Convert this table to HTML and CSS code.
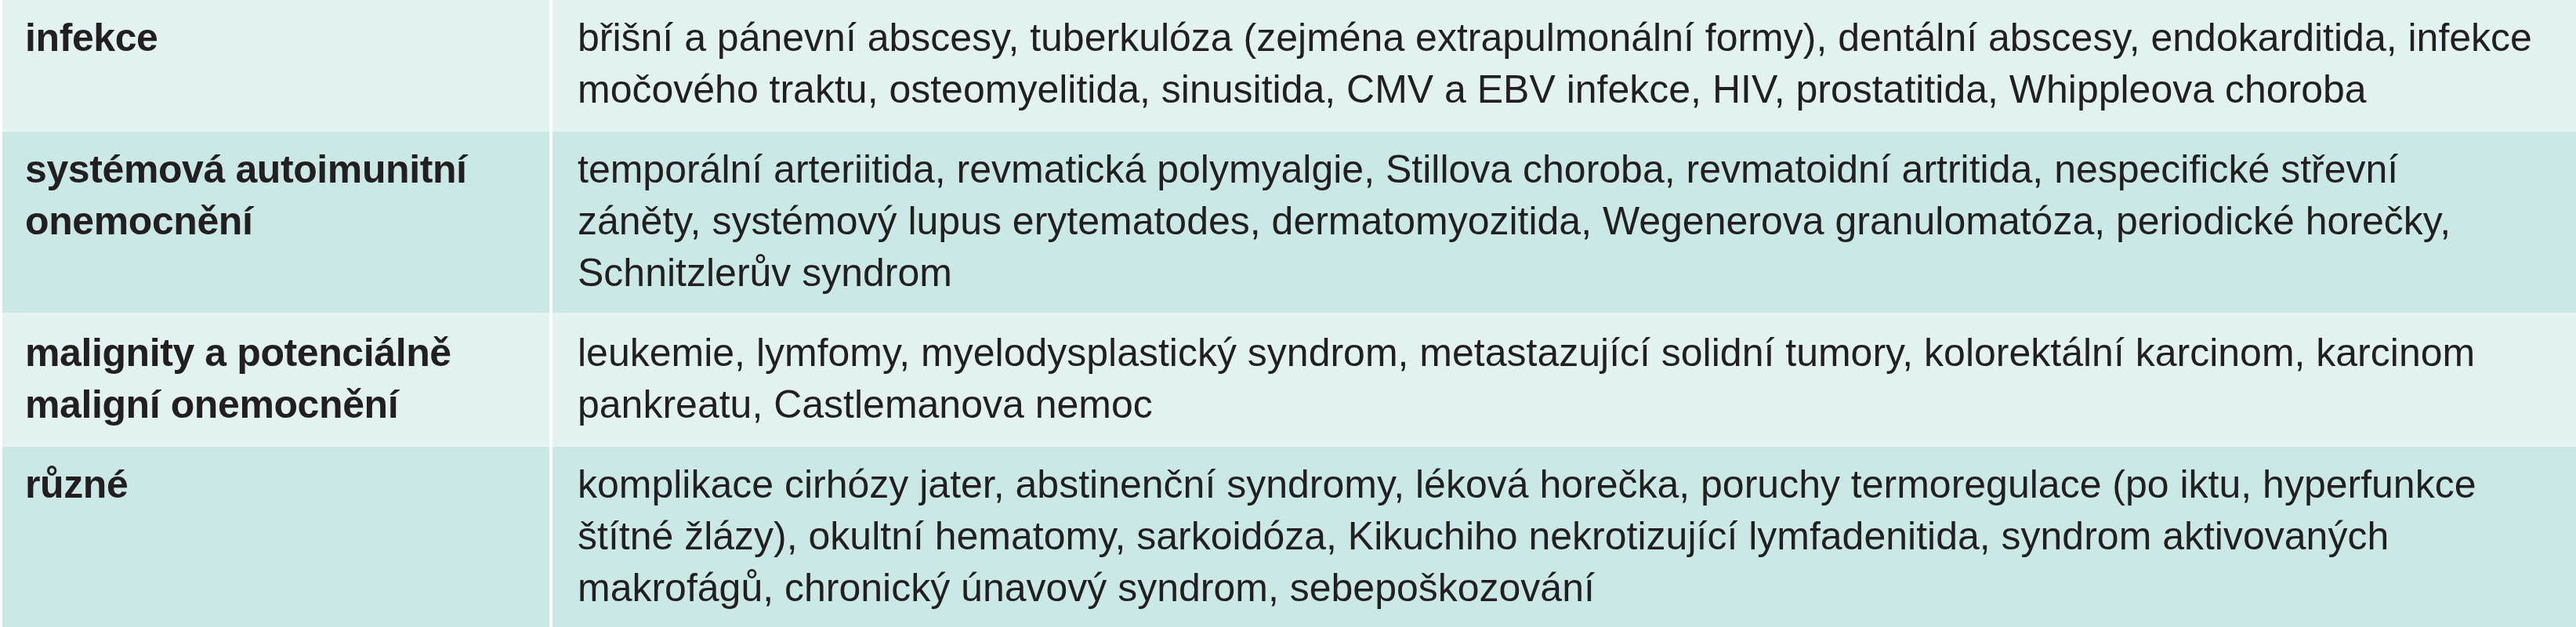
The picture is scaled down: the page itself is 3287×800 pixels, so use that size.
FILE: index.html
```html
<!DOCTYPE html>
<html lang="cs">
<head>
<meta charset="utf-8">
<title>Příčiny horečky</title>
<link rel="stylesheet" href="styles.css">
</head>
<body>
<div class="table">
  <div class="row light">
    <div class="cat">infekce</div>
    <div class="desc">břišní a pánevní abscesy, tuberkulóza (zejména extrapulmonální formy), dentální abscesy, endokarditida, infekce<br>močového traktu, osteomyelitida, sinusitida, CMV a EBV infekce, HIV, prostatitida, Whippleova choroba</div>
  </div>
  <div class="row dark">
    <div class="cat">systémová autoimunitní<br>onemocnění</div>
    <div class="desc">temporální arteriitida, revmatická polymyalgie, Stillova choroba, revmatoidní artritida, nespecifické střevní<br>záněty, systémový lupus erytematodes, dermatomyozitida, Wegenerova granulomatóza, periodické horečky,<br>Schnitzlerův syndrom</div>
  </div>
  <div class="row light">
    <div class="cat">malignity a potenciálně<br>maligní onemocnění</div>
    <div class="desc">leukemie, lymfomy, myelodysplastický syndrom, metastazující solidní tumory, kolorektální karcinom, karcinom<br>pankreatu, Castlemanova nemoc</div>
  </div>
  <div class="row dark">
    <div class="cat">různé</div>
    <div class="desc">komplikace cirhózy jater, abstinenční syndromy, léková horečka, poruchy termoregulace (po iktu, hyperfunkce<br>štítné žlázy), okultní hematomy, sarkoidóza, Kikuchiho nekrotizující lymfadenitida, syndrom aktivovaných<br>makrofágů, chronický únavový syndrom, sebepoškozování</div>
  </div>
</div>
</body>
</html>
```

FILE: styles.css
```css
html, body {
  margin: 0;
  padding: 0;
  background: #ffffff;
}

body {
  font-family: "Liberation Sans", Arial, sans-serif;
  font-size: 50px;
  line-height: 66px;
  color: #231f20;
}

.table {
  width: 3287px;
  padding-left: 3px;
  box-sizing: border-box;
  background: #ffffff;
}

.row {
  display: grid;
  grid-template-columns: 698px 1fr;
  column-gap: 4px;
}

.row > div {
  padding: 15px 30px 18px 29px;
}

.row + .row > div {
  border-top: 3px solid #e6f4f3;
}

.row.light > div {
  background: #e1f2f1;
}

.row.dark > div {
  background: #cae8e6;
}

.cat {
  font-weight: bold;
  letter-spacing: -0.4px;
}

.row > .desc {
  padding-left: 32px;
}
```
